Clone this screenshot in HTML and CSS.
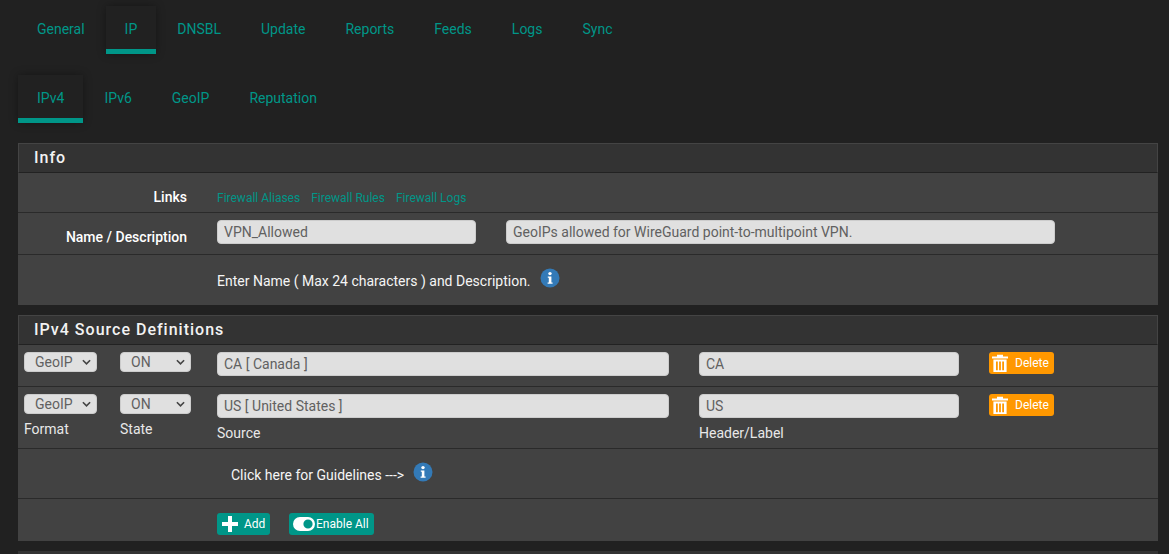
FILE: index.html
```html
<!DOCTYPE html>
<html lang="en">
  <head>
    <meta charset="UTF-8" />
    <title>pfBlockerNG IP</title>
    <link rel="stylesheet" href="styles.css">
  </head>
  <body>
    <ul class="tabs tabs-main">
      <li><a href="#">General</a></li>
      <li class="active"><a href="#">IP</a></li>
      <li><a href="#">DNSBL</a></li>
      <li><a href="#">Update</a></li>
      <li><a href="#">Reports</a></li>
      <li><a href="#">Feeds</a></li>
      <li><a href="#">Logs</a></li>
      <li><a href="#">Sync</a></li>
    </ul>
    <ul class="tabs tabs-sub">
      <li class="active"><a href="#">IPv4</a></li>
      <li><a href="#">IPv6</a></li>
      <li><a href="#">GeoIP</a></li>
      <li><a href="#">Reputation</a></li>
    </ul>

    <div class="panel">
      <h2 class="panel-title">Info</h2>
      <div class="row row-links">
        <label class="row-label">Links</label>
        <div class="links">
          <a href="#">Firewall Aliases</a>
          <a href="#">Firewall Rules</a>
          <a href="#">Firewall Logs</a>
        </div>
      </div>
      <div class="row row-name">
        <label class="row-label">Name / Description</label>
        <input class="field field-name" type="text" value="VPN_Allowed" />
        <input class="field field-desc" type="text" value="GeoIPs allowed for WireGuard point-to-multipoint VPN." />
      </div>
      <div class="row row-help">
        <span class="row-label"></span>
        <span class="help-text">Enter Name ( Max 24 characters ) and Description.</span>
        <svg class="info-icon" viewBox="0 0 20 20"><circle cx="10" cy="10" r="9.5" fill="#337ab7"/><circle cx="10" cy="5.6" r="1.7" fill="#fff"/><path d="M7.8 8.4h3.6v6h1.2v1.4H7.6v-1.4h1.2V9.8h-1z" fill="#fff"/></svg>
      </div>
    </div>

    <div class="panel">
      <h2 class="panel-title">IPv4 Source Definitions</h2>
      <div class="source-row source-first">
        <div class="select select-format">GeoIP<svg viewBox="0 0 10 6"><path d="M1 1l4 4 4-4" fill="none" stroke="#444" stroke-width="1.8"/></svg></div>
        <div class="select select-state">ON<svg viewBox="0 0 10 6"><path d="M1 1l4 4 4-4" fill="none" stroke="#444" stroke-width="1.8"/></svg></div>
        <input class="field field-source" type="text" value="CA [ Canada ]" />
        <input class="field field-header" type="text" value="CA" />
        <button class="btn btn-delete">
          <svg viewBox="0 0 16 18"><path d="M0 2.6h5V.8h6v1.8h5v1.8H0zM1.4 5.4h13.2V18H1.4zM4 7.4v8.8h1.8V7.4zM7.1 7.4v8.8h1.8V7.4zM10.2 7.4v8.8H12V7.4z" fill="#fff" fill-rule="evenodd"/></svg>
          Delete
        </button>
      </div>
      <div class="source-row source-last">
        <div class="cell">
          <div class="select select-format">GeoIP<svg viewBox="0 0 10 6"><path d="M1 1l4 4 4-4" fill="none" stroke="#444" stroke-width="1.8"/></svg></div>
          <span class="hint">Format</span>
        </div>
        <div class="cell">
          <div class="select select-state">ON<svg viewBox="0 0 10 6"><path d="M1 1l4 4 4-4" fill="none" stroke="#444" stroke-width="1.8"/></svg></div>
          <span class="hint">State</span>
        </div>
        <div class="cell">
          <input class="field field-source" type="text" value="US [ United States ]" />
          <span class="hint">Source</span>
        </div>
        <div class="cell">
          <input class="field field-header" type="text" value="US" />
          <span class="hint">Header/Label</span>
        </div>
        <button class="btn btn-delete">
          <svg viewBox="0 0 16 18"><path d="M0 2.6h5V.8h6v1.8h5v1.8H0zM1.4 5.4h13.2V18H1.4zM4 7.4v8.8h1.8V7.4zM7.1 7.4v8.8h1.8V7.4zM10.2 7.4v8.8H12V7.4z" fill="#fff" fill-rule="evenodd"/></svg>
          Delete
        </button>
      </div>
      <div class="row row-guide">
        <span class="help-text">Click here for Guidelines ---&gt;</span>
        <svg class="info-icon" viewBox="0 0 20 20"><circle cx="10" cy="10" r="9.5" fill="#337ab7"/><circle cx="10" cy="5.6" r="1.7" fill="#fff"/><path d="M7.8 8.4h3.6v6h1.2v1.4H7.6v-1.4h1.2V9.8h-1z" fill="#fff"/></svg>
      </div>
      <div class="row row-actions">
        <button class="btn btn-add">
          <svg viewBox="0 0 16 16"><path d="M6 0h4v6h6v4h-6v6H6v-6H0V6h6z" fill="#fff"/></svg>
          Add
        </button>
        <button class="btn btn-enable">
          <svg viewBox="0 0 22 14"><path d="M7 0h8a7 7 0 0 1 0 14H7A7 7 0 0 1 7 0zm8 2.4a4.6 4.6 0 1 0 0 9.2 4.6 4.6 0 0 0 0-9.2z" fill="#fff" fill-rule="evenodd"/></svg>Enable All
        </button>
      </div>
    </div>
    <div class="panel panel-next"></div>
  </body>
</html>
```

FILE: styles.css
```css
* {
  margin: 0;
  padding: 0;
  box-sizing: border-box;
}
html {
  overflow: hidden;
}
body {
  width: 1169px;
  height: 554px;
  overflow: hidden;
  padding: 0 11px 0 18px;
  background: #212121;
  font-family: Roboto, "Liberation Sans", sans-serif;
  font-size: 14px;
  color: #fff;
}

.tabs {
  display: flex;
  list-style: none;
}
.tabs-main {
  height: 54px;
  padding-top: 6px;
}
.tabs-sub {
  height: 69px;
  padding-top: 21px;
  margin-bottom: 20px;
}
.tabs li {
  margin-right: 2px;
  border-bottom: 5px solid transparent;
}
.tabs a {
  display: block;
  padding: 15px 19px 0;
  line-height: 17px;
  color: #009688;
  text-decoration: none;
}
.tabs li.active {
  border-bottom-color: #009688;
  box-shadow: 0 0 8px rgba(0, 0, 0, 0.35);
}

.panel {
  width: 1140px;
  margin-bottom: 10px;
  background: #424242;
}
.panel-title {
  height: 30px;
  padding-left: 15px;
  background: #333;
  border: 1px solid #444;
  border-bottom-color: #222;
  font-size: 16px;
  font-weight: 500;
  line-height: 27px;
  letter-spacing: 1px;
  color: #f2f2f2;
}
.panel-next {
  height: 3px;
  margin-bottom: 0;
  background: #333;
}

.row {
  display: flex;
  align-items: center;
  border-bottom: 1px solid #2a2a2a;
}
.row-label {
  flex: none;
  width: 169px;
  margin-right: 30px;
  text-align: right;
  font-weight: 500;
}
.row-links {
  height: 40px;
  padding-top: 9px;
}
.links {
  display: flex;
  gap: 11px;
  margin-top: 2px;
  font-size: 12px;
}
.links a {
  color: #009688;
  text-decoration: none;
}
.row-name {
  height: 42px;
}
.row-name .field {
  margin-top: -3px;
}
.row-name .row-label {
  margin-top: 7px;
}
.row-help {
  height: 50px;
  padding-top: 1px;
  border-bottom: 0;
}
.help-text {
  color: #f5f5f5;
}
.info-icon {
  width: 20px;
  height: 20px;
  margin: -6px 0 0 9px;
}

.field {
  height: 24px;
  padding: 0 6px;
  background: #e0e0e0;
  border: 1px solid #ccc;
  border-radius: 4px;
  font: 14px Roboto, sans-serif;
  color: #616161;
}
.field-name {
  width: 259px;
  margin-right: 30px;
}
.field-desc {
  width: 549px;
}
.field-source {
  width: 452px;
  margin-right: 30px;
}
.field-header {
  width: 260px;
  margin-right: 30px;
}

.source-row {
  display: flex;
  align-items: flex-start;
  padding: 7px 0 0 6px;
  border-bottom: 1px solid #2a2a2a;
}
.source-first {
  height: 42px;
}
.source-last {
  height: 62px;
}
.cell {
  display: flex;
  flex-direction: column;
}
.hint {
  margin-top: 6px;
  line-height: 18px;
  color: #e8e8e8;
}

.select {
  display: flex;
  align-items: center;
  justify-content: space-between;
  height: 20px;
  padding: 0 5px 0 10px;
  background: #e0e0e0;
  border: 1px solid #ccc;
  border-radius: 4px;
  color: #616161;
}
.select svg {
  width: 9px;
  height: 6px;
}
.select-format {
  width: 73px;
  margin-right: 23px;
}
.select-state {
  width: 71px;
  margin-right: 26px;
}

.btn {
  display: flex;
  align-items: center;
  border: 0;
  border-radius: 3px;
  color: #fff;
  font: 12px Roboto, sans-serif;
}
.btn-delete {
  width: 65px;
  height: 22px;
  padding-left: 3px;
  gap: 7px;
  background: #ff9800;
}
.btn-delete svg {
  width: 16px;
  height: 18px;
}
.row-guide {
  height: 50px;
  padding: 2px 0 0 213px;
}
.row-actions {
  height: 42px;
  padding: 8px 0 0 199px;
  border-bottom: 0;
}
.btn-add {
  width: 53px;
  height: 22px;
  padding-left: 5px;
  gap: 6px;
  background: #009688;
}
.btn-add svg {
  width: 16px;
  height: 16px;
}
.btn-enable {
  width: 85px;
  height: 22px;
  margin-left: 19px;
  padding-left: 4px;
  gap: 1px;
  background: #009688;
}
.btn-enable svg {
  width: 22px;
  height: 14px;
}
```
